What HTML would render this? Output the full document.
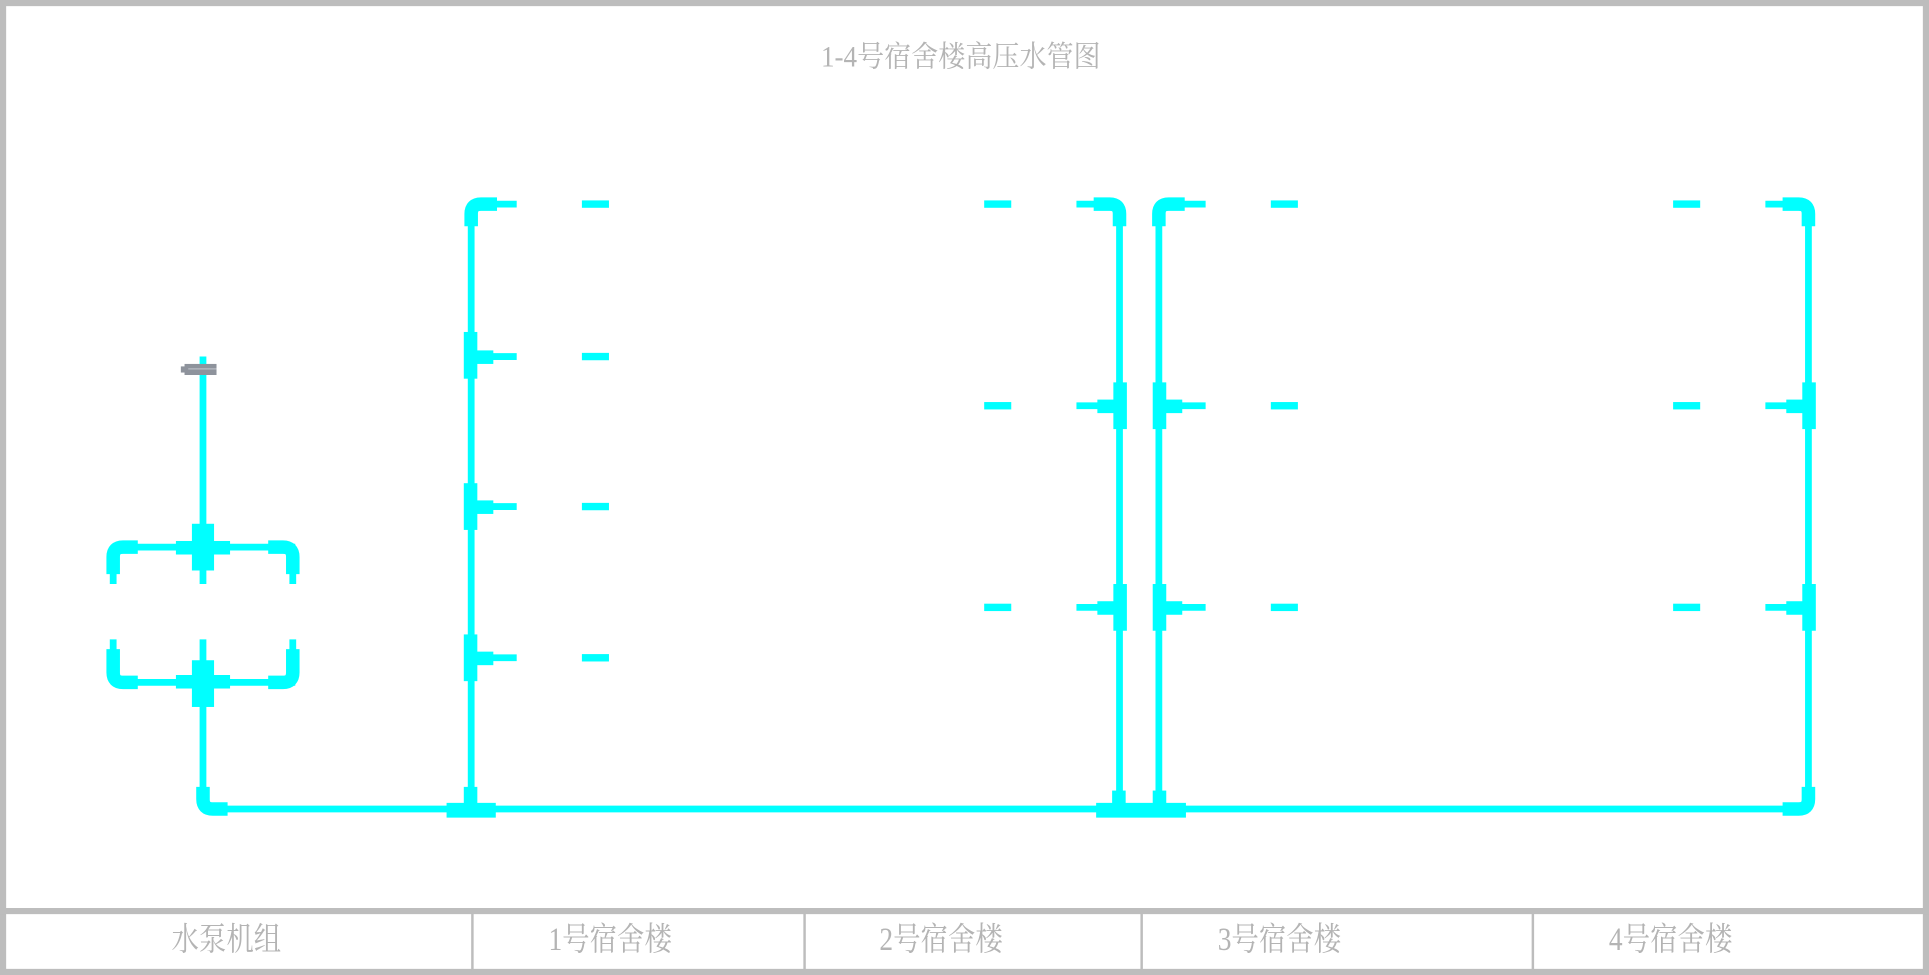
<!DOCTYPE html>
<html><head><meta charset="utf-8"><style>
html,body{margin:0;padding:0;background:#fff;width:1929px;height:975px;overflow:hidden}
svg{display:block}
text{font-family:"Liberation Serif","Noto Serif CJK SC",serif;fill:#b4b4b4}
</style></head><body>
<svg width="1929" height="975" viewBox="0 0 1568 793" preserveAspectRatio="none" xmlns="http://www.w3.org/2000/svg">
<rect x="2.5" y="2.5" width="1563" height="788" fill="none" stroke="#bdbdbd" stroke-width="5"/>
<line x1="0" y1="741" x2="1568" y2="741" stroke="#bdbdbd" stroke-width="5"/>
<g stroke="#bdbdbd" stroke-width="2">
<line x1="384" y1="742" x2="384" y2="790"/><line x1="654" y1="742" x2="654" y2="790"/>
<line x1="928" y1="742" x2="928" y2="790"/><line x1="1246" y1="742" x2="1246" y2="790"/>
</g>
<g transform="translate(781 0) scale(1.0 1.1)"><text x="0" y="49" font-size="22" text-anchor="middle">1-4号宿舍楼高压水管图</text></g>
<g font-size="23" text-anchor="middle">
<g transform="translate(184 0) scale(0.97 1.15)"><text x="0" y="672">水泵机组</text></g>
<g transform="translate(496 0) scale(0.97 1.15)"><text x="0" y="672">1号宿舍楼</text></g>
<g transform="translate(765 0) scale(0.97 1.15)"><text x="0" y="672">2号宿舍楼</text></g>
<g transform="translate(1040 0) scale(0.97 1.15)"><text x="0" y="672">3号宿舍楼</text></g>
<g transform="translate(1358 0) scale(0.97 1.15)"><text x="0" y="672">4号宿舍楼</text></g>
</g>
<g fill="none" stroke="#00ffff" stroke-width="5.5">
<line x1="165" y1="290" x2="165" y2="475"/>
<line x1="92" y1="445" x2="240" y2="445"/>
<line x1="92" y1="445" x2="92" y2="475"/><line x1="238" y1="445" x2="238" y2="475"/>
<line x1="92" y1="520" x2="92" y2="555"/><line x1="238" y1="520" x2="238" y2="555"/>
<line x1="165" y1="520" x2="165" y2="658"/>
<line x1="92" y1="555" x2="240" y2="555"/>
<line x1="165" y1="658" x2="1470" y2="658"/>
<line x1="383" y1="165" x2="383" y2="658"/>
<line x1="910" y1="165" x2="910" y2="658"/>
<line x1="942" y1="165" x2="942" y2="658"/>
<line x1="1470" y1="165" x2="1470" y2="658"/>
<path d="M383 166H420M383 290H420M383 412H420M383 535H420"/>
<path d="M875 166H910M875 330H910M875 494H910"/>
<path d="M942 166H980M942 330H980M942 494H980"/>
<path d="M1435 166H1470M1435 330H1470M1435 494H1470"/>
</g>
<g fill="none" stroke="#00ffff" stroke-width="11" stroke-linejoin="round">
<path d="M92 467V453Q92 445 100 445H112"/><path d="M238 467V453Q238 445 230 445H218"/>
<path d="M92 528V547Q92 555 100 555H112"/><path d="M238 528V547Q238 555 230 555H218"/>
<path d="M165 640V650Q165 658 173 658H185"/>
<path d="M383 184V174Q383 166 391 166H404"/>
<path d="M910 184V174Q910 166 902 166H889"/>
<path d="M942 184V174Q942 166 950 166H963"/>
<path d="M1470 184V174Q1470 166 1462 166H1449"/>
<path d="M1470 640V650Q1470 658 1462 658H1449"/>
</g>
<g fill="#00ffff">
<rect x="156" y="426" width="18" height="38"/><rect x="143" y="440" width="44" height="11"/>
<rect x="156" y="537" width="18" height="38"/><rect x="143" y="549" width="44" height="11"/>
<rect x="377" y="270" width="11" height="38"/><rect x="386" y="285" width="15" height="11"/>
<rect x="377" y="393" width="11" height="38"/><rect x="386" y="407" width="15" height="11"/>
<rect x="377" y="516" width="11" height="38"/><rect x="386" y="530" width="15" height="11"/>
<rect x="905" y="311" width="11" height="38"/><rect x="892" y="325" width="15" height="11"/>
<rect x="905" y="475" width="11" height="38"/><rect x="892" y="489" width="15" height="11"/>
<rect x="937" y="311" width="11" height="38"/><rect x="946" y="325" width="15" height="11"/>
<rect x="937" y="475" width="11" height="38"/><rect x="946" y="489" width="15" height="11"/>
<rect x="1465" y="311" width="11" height="38"/><rect x="1452" y="325" width="15" height="11"/>
<rect x="1465" y="475" width="11" height="38"/><rect x="1452" y="489" width="15" height="11"/>
<rect x="363" y="653" width="40" height="12"/><rect x="377" y="640" width="11" height="16"/>
<rect x="891" y="653" width="73" height="12"/><rect x="904" y="643" width="11" height="12"/><rect x="937" y="643" width="11" height="12"/>
<rect x="473" y="163" width="22" height="6"/><rect x="473" y="287" width="22" height="6"/>
<rect x="473" y="409" width="22" height="6"/><rect x="473" y="532" width="22" height="6"/>
<rect x="800" y="163" width="22" height="6"/><rect x="800" y="327" width="22" height="6"/><rect x="800" y="491" width="22" height="6"/>
<rect x="1033" y="163" width="22" height="6"/><rect x="1033" y="327" width="22" height="6"/><rect x="1033" y="491" width="22" height="6"/>
<rect x="1360" y="163" width="22" height="6"/><rect x="1360" y="327" width="22" height="6"/><rect x="1360" y="491" width="22" height="6"/>
</g>
<rect x="150" y="296" width="26" height="9" fill="#8e939c"/>
<rect x="147" y="298" width="5" height="5" fill="#8e939c"/>
<line x1="153" y1="300" x2="176" y2="300" stroke="#b8bcc3" stroke-width="1"/>
</svg>
</body></html>
